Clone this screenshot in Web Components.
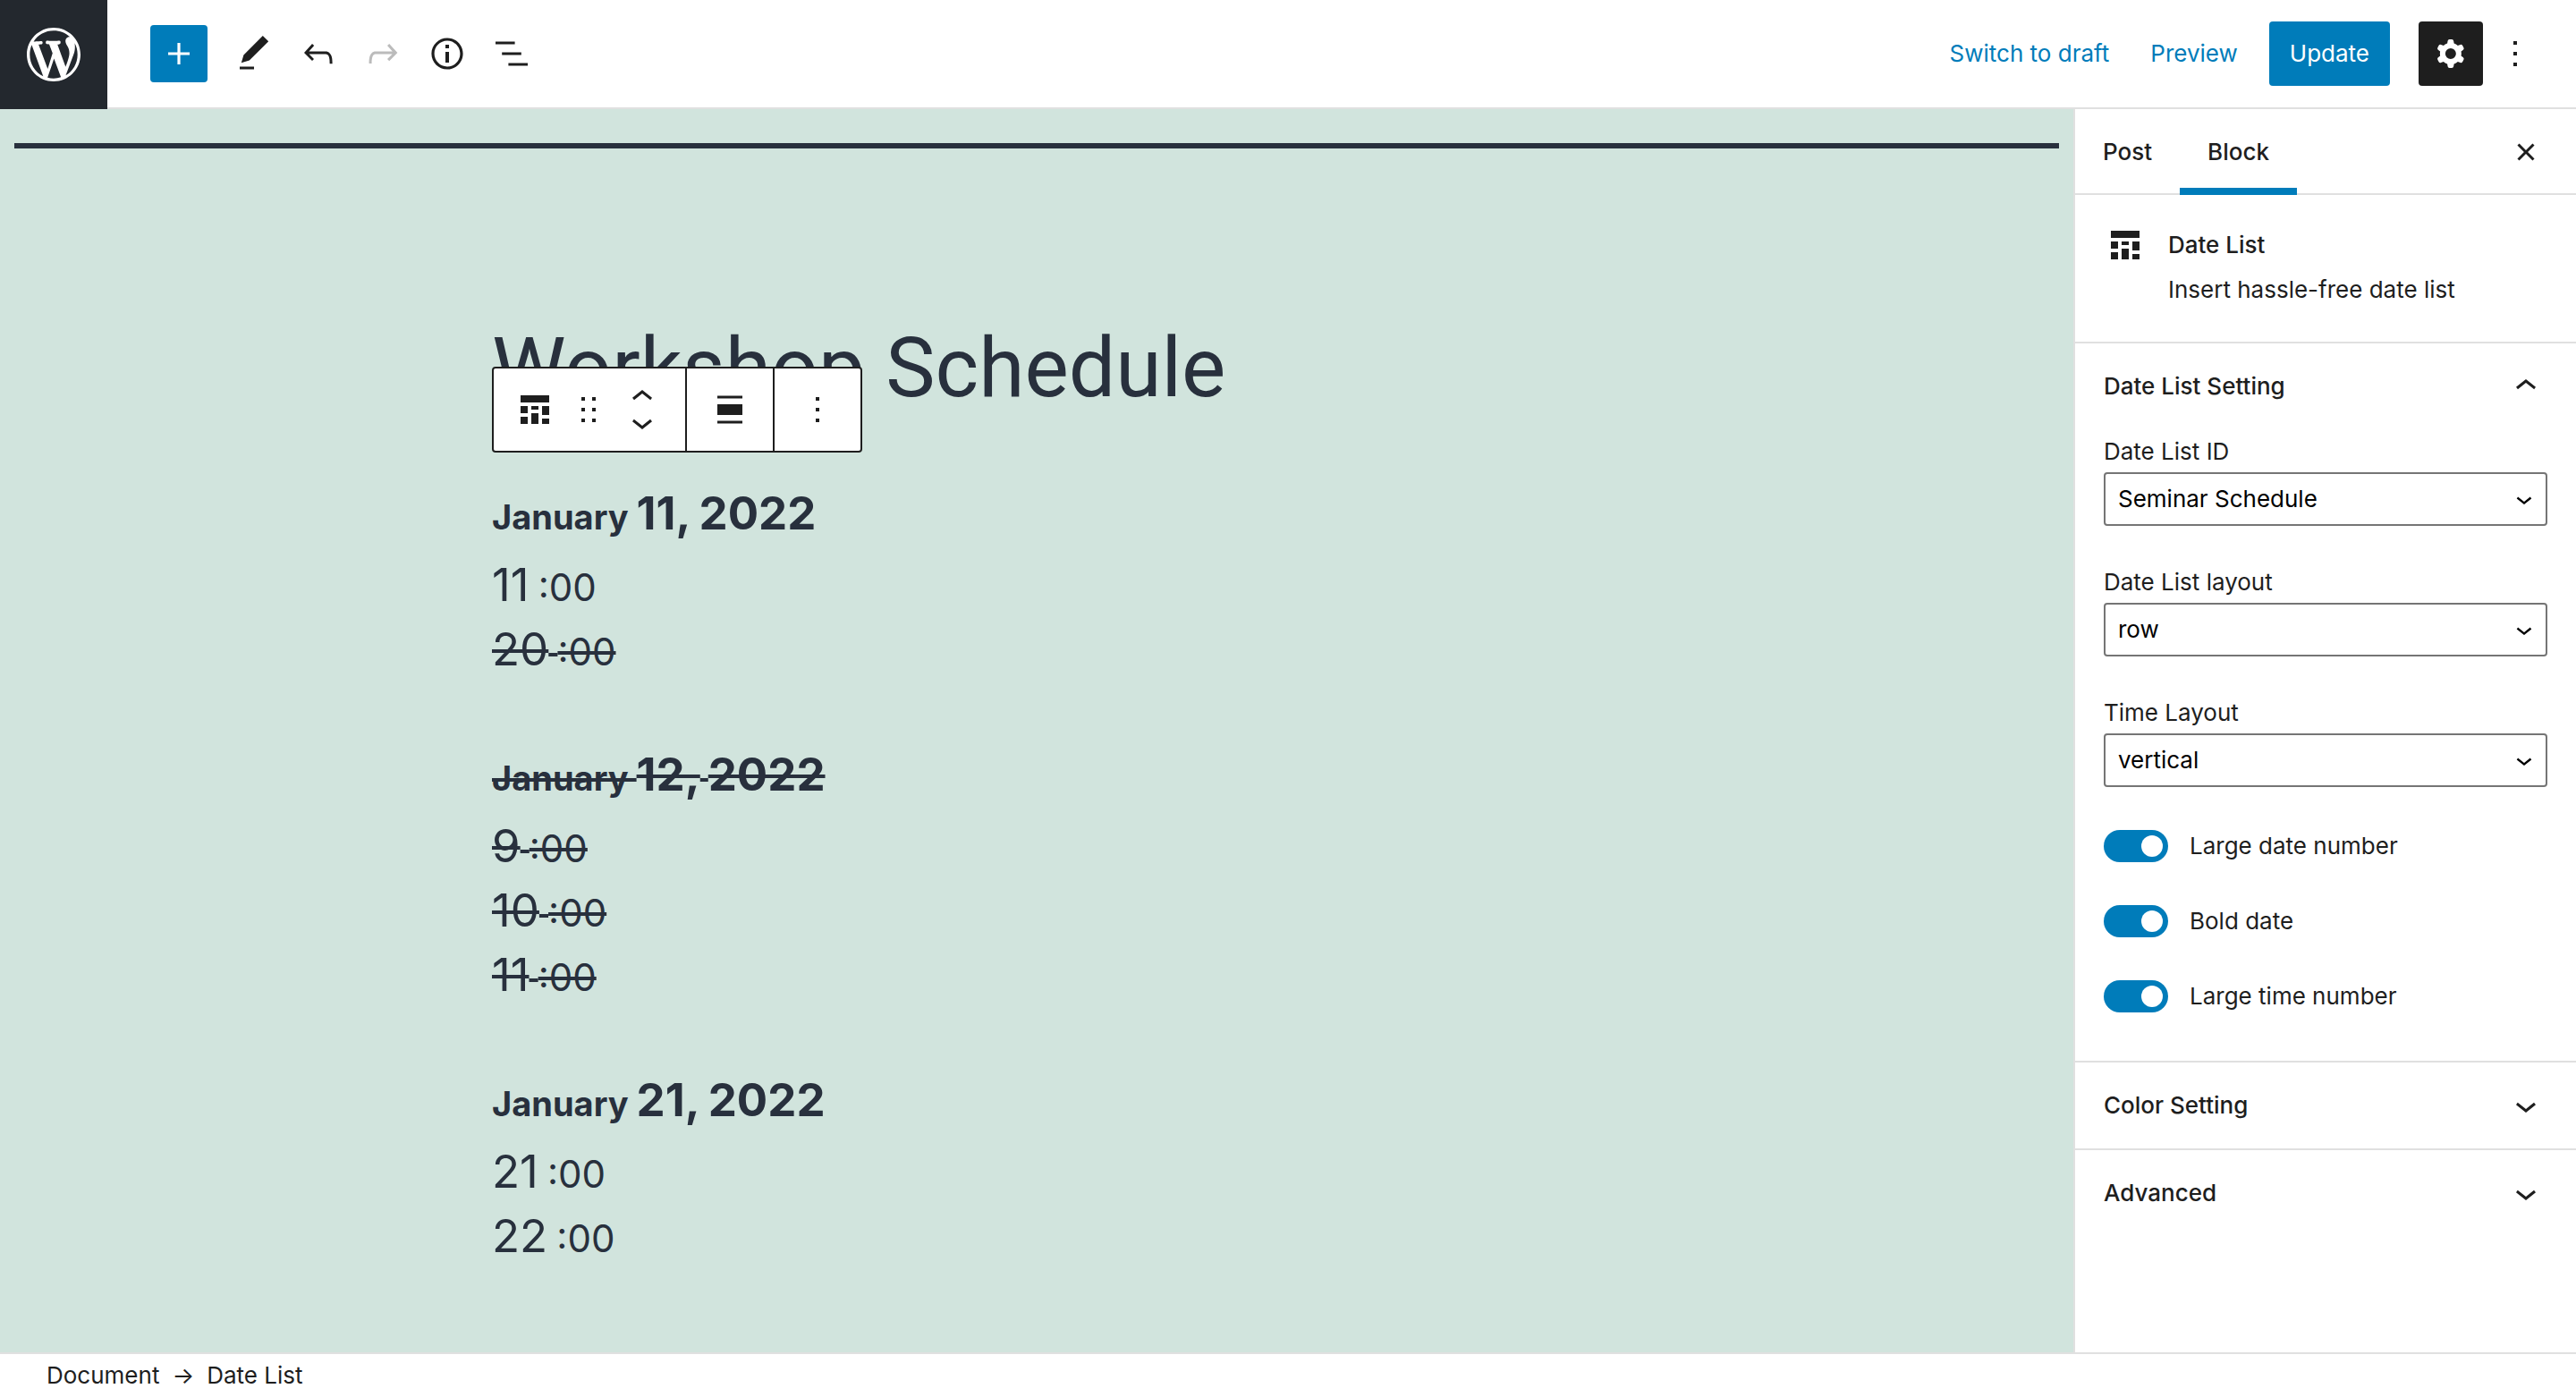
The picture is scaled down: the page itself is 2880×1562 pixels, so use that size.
<!DOCTYPE html>
<html lang="en">
<head>
<meta charset="utf-8">
<title>Workshop Schedule</title>
<style>
  html, body { margin: 0; height: 100%; }
  body {
    --accent: #007cba;
    --ink: #1e1e1e;
    --line: #e0e0e0;
    --canvas: #d1e4dd;
    --copy: #28303d;
    font: 400 26px/32px Inter, "Liberation Sans", sans-serif;
    color: var(--ink);
    background: #fff;
  }
</style>
</head>
<body>
<post-editor>
  <editor-header slot="header"></editor-header>
  <editor-canvas slot="canvas" heading="Workshop Schedule">
    <date-entry month="January" day="11," year="2022">
      <time-entry hour="11" minute=":00"></time-entry>
      <time-entry hour="20" minute=":00" past></time-entry>
    </date-entry>
    <date-entry month="January" day="12," year="2022" past>
      <time-entry hour="9" minute=":00" past></time-entry>
      <time-entry hour="10" minute=":00" past></time-entry>
      <time-entry hour="11" minute=":00" past></time-entry>
    </date-entry>
    <date-entry month="January" day="21," year="2022">
      <time-entry hour="21" minute=":00"></time-entry>
      <time-entry hour="22" minute=":00"></time-entry>
    </date-entry>
  </editor-canvas>
  <editor-sidebar slot="sidebar">
    <settings-panel heading="Date List Setting" open>
      <select-field label="Date List ID" value="Seminar Schedule"></select-field>
      <select-field label="Date List layout" value="row"></select-field>
      <select-field label="Time Layout" value="vertical"></select-field>
      <toggle-field label="Large date number"></toggle-field>
      <toggle-field label="Bold date"></toggle-field>
      <toggle-field label="Large time number"></toggle-field>
    </settings-panel>
    <settings-panel heading="Color Setting"></settings-panel>
    <settings-panel heading="Advanced"></settings-panel>
  </editor-sidebar>
  <editor-breadcrumb slot="footer"></editor-breadcrumb>
</post-editor>

<script>
const RESET = `
  *, *::before { box-sizing: border-box; }
  button {
    display: flex; align-items: center; justify-content: center;
    margin: 0; padding: 0; border: 0; border-radius: 4px; background: none;
    font: inherit; color: inherit; cursor: pointer;
  }
  button:disabled { color: #bbb; cursor: default; }
`;

const define = (name, render, css) => {
  customElements.define(name, class extends HTMLElement {
    connectedCallback() {
      if (this.shadowRoot) return;
      const root = this.attachShadow({ mode: 'open' });
      root.innerHTML = `<style>${RESET}${css}</style>${render(this)}`;
    }
  });
};

const ICONS = {
  plus: 'M18 11.2h-5.2V6h-1.6v5.2H6v1.6h5.2V18h1.6v-5.2H18z',
  edit: 'M20.1 5.1L16.9 2 6.2 12.7l-1.3 4.4 4.5-1.3L20.1 5.1zM4 20.8h8v-1.5H4v1.5z',
  undo: 'M18.3 11.7c-.6-.6-1.4-.9-2.3-.9H6.7l2.9-3.3-1.1-1-4.5 5L8.5 16l1-1-2.7-2.7H16c.5 0 .9.2 1.3.5 1 1 1 3.4 1 4.5v.3h1.5v-.2c0-1.5 0-4.3-1.5-5.7z',
  redo: 'M15.6 6.5l-1.1 1 2.9 3.3H8c-.9 0-1.7.3-2.3.9-1.4 1.5-1.4 4.2-1.4 5.6v.2h1.5v-.3c0-1.1 0-3.5 1-4.5.3-.3.7-.5 1.3-.5h9.2L14.5 15l1.1 1.1 4.6-4.6-4.6-5z',
  info: 'M12 3.2c-4.8 0-8.8 3.9-8.8 8.8 0 4.8 3.9 8.8 8.8 8.8 4.8 0 8.8-3.9 8.8-8.8 0-4.8-4-8.8-8.8-8.8zm0 16c-4 0-7.2-3.3-7.2-7.2C4.8 8 8 4.8 12 4.8s7.2 3.3 7.2 7.2c0 4-3.2 7.2-7.2 7.2zM11 17h2v-6h-2v6zm0-8h2V7h-2v2z',
  list: 'M13.8 5.2H3v1.5h10.8V5.2zm-3.6 12v1.5H21v-1.5H10.2zm7.2-6H6.6v1.5h10.8v-1.5z',
  cog: 'M10.289 4.836A1 1 0 0111.275 4h1.306a1 1 0 01.987.836l.244 1.466c.787.26 1.503.679 2.108 1.218l1.393-.522a1 1 0 011.216.437l.653 1.13a1 1 0 01-.23 1.273l-1.148.944a6.025 6.025 0 010 2.435l1.149.946a1 1 0 01.23 1.272l-.653 1.13a1 1 0 01-1.216.437l-1.394-.522c-.605.54-1.32.958-2.108 1.218l-.244 1.466a1 1 0 01-.987.836h-1.306a1 1 0 01-.986-.836l-.244-1.466a5.995 5.995 0 01-2.108-1.218l-1.394.522a1 1 0 01-1.217-.436l-.653-1.131a1 1 0 01.23-1.272l1.149-.946a6.026 6.026 0 010-2.435l-1.148-.944a1 1 0 01-.23-1.272l.653-1.131a1 1 0 011.217-.437l1.393.522a5.994 5.994 0 012.108-1.218l.244-1.466zM14.929 12a3 3 0 11-6 0 3 3 0 016 0z',
  more: 'M13 19h-2v-2h2v2zm0-6h-2v-2h2v2zm0-6h-2V5h2v2z',
  close: 'M12 13.06l3.712 3.713 1.061-1.06L13.061 12l3.712-3.712-1.06-1.06L12 10.938 8.288 7.227l-1.061 1.06L10.939 12l-3.712 3.712 1.06 1.061L12 13.061z',
  up: 'M6.5 12.4L12 8l5.5 4.4-.9 1.2L12 10l-4.5 3.6-1-1.2z',
  down: 'M17.5 11.6L12 16l-5.5-4.4.9-1.2L12 14l4.5-3.6 1 1.2z',
  drag: 'M8 7h2V5H8v2zm0 6h2v-2H8v2zm0 6h2v-2H8v2zm6-14v2h2V5h-2zm0 8h2v-2h-2v2zm0 6h2v-2h-2v2z',
  align: 'M5 9v6h14V9H5zm14-4.8H5v1.5h14V4.2zM5 19.8h14v-1.5H5v1.5z',
  dates: 'M4 4h16v4H4zM4 10h4v4H4zM4 16h4v4H4zM10 10h4v2h-4zM10 14h4v6h-4zM16 10h4v5h-4zM16 17h4v3h-4z',
  wordpress: 'M22 12c0-5.51-4.49-10-10-10C6.48 2 2 6.49 2 12c0 5.52 4.48 10 10 10 5.51 0 10-4.48 10-10zM9.78 17.37L6.37 8.22c.55-.02 1.17-.08 1.17-.08.5-.06.44-1.13-.06-1.11 0 0-1.45.11-2.37.11-.18 0-.37 0-.58-.01C6.12 4.69 8.87 3.11 12 3.11c2.33 0 4.45.87 6.05 2.34-.68-.11-1.65.39-1.65 1.58 0 .74.45 1.36.9 2.1.35.61.55 1.36.55 2.46 0 1.49-1.4 5-1.4 5l-3.03-8.37c.54-.02.82-.17.82-.17.5-.05.44-1.25-.06-1.22 0 0-1.44.12-2.38.12-.87 0-2.33-.12-2.33-.12-.5-.03-.56 1.2-.06 1.22l.92.08 1.26 3.41zM19.41 12c.24-.64.74-1.87.43-4.25.7 1.29 1.05 2.71 1.05 4.25 0 3.29-1.73 6.24-4.4 7.78.97-2.59 1.94-5.2 2.92-7.78zM8.1 20.09C5.12 18.65 3.11 15.53 3.11 12c0-1.3.23-2.48.72-3.59C5.25 12.3 6.67 16.2 8.1 20.09zm4.03-6.63l2.58 6.98c-.86.29-1.76.45-2.71.45-.79 0-1.57-.11-2.29-.33.81-2.38 1.62-4.74 2.42-7.1z'
};

define('ui-icon', el => `
  <svg viewBox="0 0 24 24" aria-hidden="true"><path fill-rule="evenodd" d="${ICONS[el.getAttribute('name')]}"/></svg>
`, `
  :host { display: block; flex: none; width: var(--icon, 48px); height: var(--icon, 48px); }
  svg { display: block; width: 100%; height: 100%; fill: currentColor; }
`);

define('post-editor', () => `
  <slot name="header"></slot>
  <main><slot name="canvas"></slot><slot name="sidebar"></slot></main>
  <slot name="footer"></slot>
`, `
  :host { display: flex; flex-direction: column; height: 100vh; min-width: 1500px; }
  main { flex: 1; display: flex; min-height: 0; }
`);

define('editor-header', () => `
  <a class="home" href="#" aria-label="View posts"><ui-icon name="wordpress"></ui-icon></a>
  <nav class="tools" aria-label="Document tools">
    <button class="add" aria-label="Add block"><ui-icon name="plus"></ui-icon></button>
    <button aria-label="Tools"><ui-icon name="edit"></ui-icon></button>
    <button aria-label="Undo"><ui-icon name="undo"></ui-icon></button>
    <button aria-label="Redo" disabled><ui-icon name="redo"></ui-icon></button>
    <button aria-label="Details"><ui-icon name="info"></ui-icon></button>
    <button aria-label="List view"><ui-icon name="list"></ui-icon></button>
  </nav>
  <div class="actions">
    <button class="text">Switch to draft</button>
    <button class="text">Preview</button>
    <button class="primary">Update</button>
    <button class="square settings" aria-label="Settings"><ui-icon name="cog"></ui-icon></button>
    <button class="square" aria-label="Options"><ui-icon name="more"></ui-icon></button>
  </div>
`, `
  :host { display: flex; flex: none; height: 122px; background: #fff; }
  .home { --icon: 72px; flex: none; display: grid; place-items: center; width: 120px; background: #23282e; color: #fff; }
  .tools, .actions { display: flex; align-items: center; border-bottom: 2px solid var(--line); }
  .tools { flex: 1; padding-left: 48px; }
  .tools button { width: 72px; height: 72px; }
  .tools .add { width: 64px; height: 64px; margin-right: 16px; background: var(--accent); color: #fff; }
  .actions { padding-right: 32px; }
  .actions button { height: 72px; padding: 0 23px; }
  .text { color: var(--accent); }
  .actions .primary { margin: 0 32px 0 12px; background: var(--accent); color: #fff; }
  .actions .square { width: 72px; padding: 0; }
  .settings { background: var(--ink); color: #fff; }
`);

define('editor-canvas', el => `
  <hr>
  <article>
    <h1>${el.getAttribute('heading')}</h1>
    <section>
      <block-toolbar></block-toolbar>
      <slot></slot>
    </section>
  </article>
`, `
  :host { display: block; flex: 1; min-width: 0; overflow: hidden; padding: 38px 16px 0; background: var(--canvas); color: var(--copy); }
  hr { height: 6px; margin: 0 0 184px; border: 0; background: var(--copy); }
  article { max-width: 1218px; margin: 0 auto; }
  h1 { margin: 0 0 64px; font-family: Roboto, "Liberation Sans", sans-serif; font-size: 93px; line-height: 124px; font-weight: 400; }
  section { position: relative; display: flex; flex-direction: column; gap: 68px; }
  block-toolbar { position: absolute; left: 0; bottom: calc(100% + 32px); }
`);

define('block-toolbar', () => `
  <div class="group block">
    <button aria-label="Date List"><ui-icon name="dates"></ui-icon></button>
    <button aria-label="Drag"><ui-icon name="drag"></ui-icon></button>
    <span class="movers">
      <button class="up" aria-label="Move up"><ui-icon name="up"></ui-icon></button>
      <button class="down" aria-label="Move down"><ui-icon name="down"></ui-icon></button>
    </span>
  </div>
  <div class="group"><button class="wide" aria-label="Align"><ui-icon name="align"></ui-icon></button></div>
  <div class="group"><button class="wide" aria-label="Options"><ui-icon name="more"></ui-icon></button></div>
`, `
  :host { display: flex; box-sizing: border-box; height: 96px; border: 2px solid var(--ink); border-radius: 4px; background: #fff; color: var(--ink); }
  .group { display: flex; align-items: center; }
  .block { gap: 12px; padding: 0 24px 0 22px; }
  .group + .group { border-left: 2px solid var(--ink); }
  .wide { width: 96px; height: 92px; }
  .movers { display: flex; flex-direction: column; }
  .movers button { height: 38px; }
  .movers .up { align-items: flex-start; }
  .movers .down { align-items: flex-end; }
`);

define('date-entry', el => {
  const tag = el.hasAttribute('past') ? 's' : 'span';
  return `
    <h2><${tag} class="date"><span>${el.getAttribute('month')} </span><span class="number">${el.getAttribute('day')}</span><span> </span><span class="number">${el.getAttribute('year')}</span></${tag}></h2>
    <slot></slot>
  `;
}, `
  :host { display: block; }
  h2 { margin: 0 0 8px; font-size: 51px; line-height: 72px; font-weight: 700; }
  .date { font-size: 38px; line-height: 1; }
  .number { font-size: 51px; }
  s { text-decoration: none; }
  s span { text-decoration: line-through 4px; }
`);

define('time-entry', el => {
  const tag = el.hasAttribute('past') ? 's' : 'span';
  return `<${tag} class="time"><span class="hour">${el.getAttribute('hour')}</span><span> </span><span class="minute">${el.getAttribute('minute')}</span></${tag}>`;
}, `
  :host { display: block; font-size: 51px; line-height: 72px; }
  .time { font-size: 36px; line-height: 1; }
  .hour { font-size: 51px; }
  .minute { font-size: 42px; }
  s { text-decoration: none; }
  s span { text-decoration: line-through 4px; }
`);

define('editor-sidebar', () => `
  <header>
    <div class="tabs" role="tablist">
      <button role="tab" aria-selected="false">Post</button>
      <button role="tab" aria-selected="true">Block</button>
    </div>
    <button class="close" aria-label="Close settings"><ui-icon name="close"></ui-icon></button>
  </header>
  <div class="card">
    <ui-icon name="dates"></ui-icon>
    <div>
      <h2>Date List</h2>
      <p>Insert hassle-free date list</p>
    </div>
  </div>
  <slot></slot>
`, `
  :host { display: block; flex: none; box-sizing: border-box; width: 562px; overflow: hidden; border-left: 2px solid var(--line); background: #fff; }
  header { display: flex; justify-content: space-between; height: 96px; border-bottom: 2px solid var(--line); }
  .tabs { display: flex; }
  .tabs button { height: 96px; padding: 0 31px; border-radius: 0; font-weight: 500; }
  .tabs button[aria-selected="true"] { box-shadow: inset 0 -8px var(--accent); }
  .close { width: 48px; height: 96px; margin-right: 32px; }
  .card { display: flex; gap: 24px; height: 166px; padding: 32px; border-bottom: 2px solid var(--line); }
  .card > div { padding-top: 8px; }
  h2, p { margin: 0; font-size: 26px; line-height: 32px; }
  h2 { font-weight: 500; margin-bottom: 18px; }
`);

define('settings-panel', el => {
  const open = el.hasAttribute('open');
  return `
    <h2><button aria-expanded="${open}">${el.getAttribute('heading')}<ui-icon name="${open ? 'up' : 'down'}"></ui-icon></button></h2>
    ${open ? '<div class="body"><slot></slot></div>' : ''}
  `;
}, `
  :host { display: block; border-bottom: 2px solid var(--line); }
  :host(:last-child) { border-bottom: 0; }
  h2 { margin: 0; font-size: 26px; line-height: 32px; font-weight: 500; }
  button { justify-content: space-between; width: 100%; height: 96px; padding: 0 32px; }
  .body { padding: 10px 32px 6px; }
`);

define('select-field', el => `
  <label for="field">${el.getAttribute('label')}</label>
  <div class="box">
    <select id="field"><option>${el.getAttribute('value')}</option></select>
    <ui-icon name="down"></ui-icon>
  </div>
`, `
  :host { display: block; margin-bottom: 48px; }
  label { display: block; margin-bottom: 8px; line-height: 30px; }
  .box { display: grid; align-items: center; }
  select {
    grid-area: 1 / 1; width: 100%; height: 60px; margin: 0; padding: 0 48px 0 14px;
    appearance: none; border: 2px solid #757575; border-radius: 4px; background: #fff;
    font: inherit; color: #000;
  }
  ui-icon { --icon: 36px; grid-area: 1 / 1; justify-self: end; margin-right: 8px; color: #000; pointer-events: none; }
`);

define('toggle-field', el => `
  <input id="toggle" type="checkbox" role="switch" checked>
  <label for="toggle">${el.getAttribute('label')}</label>
`, `
  :host { display: flex; align-items: center; gap: 24px; height: 36px; margin-bottom: 48px; }
  input {
    appearance: none; display: flex; align-items: center; justify-content: flex-end; flex: none;
    width: 72px; height: 36px; margin: 0; padding: 6px; border-radius: 18px; background: var(--accent);
  }
  input::before { content: ""; width: 24px; height: 24px; border-radius: 50%; background: #fff; }
`);

define('editor-breadcrumb', () => `
  <nav aria-label="Block breadcrumb">
    <button>Document</button>
    <span>→</span>
    <button>Date List</button>
  </nav>
`, `
  :host { display: block; flex: none; border-top: 2px solid var(--line); background: #fff; }
  nav { display: flex; align-items: center; gap: 14px; height: 48px; padding: 0 52px; }
`);
</script>
</body>
</html>
